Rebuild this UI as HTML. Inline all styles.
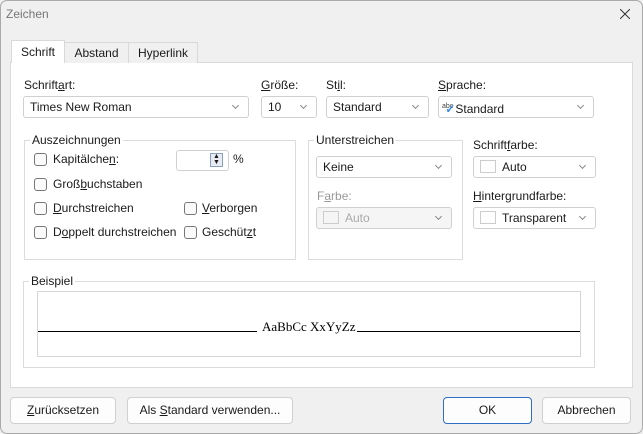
<!DOCTYPE html>
<html><head><meta charset="utf-8"><style>
*{box-sizing:border-box;margin:0;padding:0}
body{width:643px;height:434px;background:#f0f0f0;font-family:"Liberation Sans",sans-serif;font-size:12px;color:#1a1a1a;position:relative;overflow:hidden}
.a{position:absolute;white-space:nowrap}
.win{position:absolute;left:0;top:0;width:643px;height:434px;border:1px solid #aaa;border-radius:7px;background:#f0f0f0}
.panel{position:absolute;left:10px;top:62px;width:623px;height:326px;background:#fff;border:1px solid #dadada}
.tab{position:absolute;top:42px;height:21px;border:1px solid #d9d9d9;border-bottom:none;background:#f0f0f0;text-align:center;line-height:20px}
.cb{position:absolute;height:22px;border:1px solid #d0d0d0;border-radius:3px;background:#fff;padding-left:6px;line-height:20px}
.cb::after{content:"";position:absolute;right:10px;top:6px;width:4px;height:4px;border-right:1px solid #888;border-bottom:1px solid #888;transform:rotate(45deg)}
.grp{position:absolute;border:1px solid #dcdcdc}
.gl{position:absolute;background:#fff;padding:0 2px;top:-8px;left:5px;line-height:14px}
.chk{position:absolute;width:13px;height:13px;border:1px solid #777;border-radius:3px;background:#fafafa}
.sw{display:inline-block;width:16px;height:13px;border:1px solid #ccc;vertical-align:-2px;margin-right:6px}
.btn{position:absolute;top:397px;height:27px;border:1px solid #d0d0d0;border-radius:4px;background:#fdfdfd;text-align:center;line-height:25px}
u{text-decoration:underline}
</style></head><body>
<div class="win"></div>
<div class="a" style="left:6px;top:7px;color:#777;font-size:12px">Zeichen</div>
<svg class="a" style="left:620px;top:9px" width="10" height="10"><path d="M0 0L10 10M10 0L0 10" stroke="#333" stroke-width="1"/></svg>
<div class="panel"></div>
<div class="tab" style="left:64px;width:65px">Abstand</div>
<div class="tab" style="left:128px;width:70px">Hyperlink</div>
<div class="tab" style="left:11px;top:40px;height:23px;width:54px;background:#fff;line-height:22px">Schrift</div>

<div class="a" style="left:24px;top:78px">Schrift<u>a</u>rt:</div>
<div class="cb" style="left:23px;top:96px;width:226px">Times New Roman</div>
<div class="a" style="left:261px;top:78px"><u>G</u>röße:</div>
<div class="cb" style="left:261px;top:96px;width:56px">10</div>
<div class="a" style="left:326px;top:78px">St<u>i</u>l:</div>
<div class="cb" style="left:326px;top:96px;width:103px">Standard</div>
<div class="a" style="left:438px;top:78px"><u>S</u>prache:</div>
<div class="cb" style="left:438px;top:96px;width:156px;padding-left:3px"><span style="font-size:7px;color:#444;vertical-align:5px">abc</span><span style="color:#3a8ee6;margin-left:-8px;font-weight:bold">✓</span>Standard</div>

<div class="grp" style="left:24px;top:140px;width:272px;height:120px"><div class="gl">Auszeichnungen</div></div>
<div class="chk" style="left:34px;top:153px"></div><div class="a" style="left:53px;top:152px">Kapitälche<u>n</u>:</div>
<div class="a" style="left:176px;top:150px;width:53px;height:21px;border:1px solid #d0d0d0;border-radius:3px;background:#fff"></div>
<div class="a" style="left:210px;top:153px;width:13px;height:14px;border:1px solid #8aa0c0;background:#e8ecf2;font-size:7px;line-height:6px;text-align:center">▲<br>▼</div>
<div class="a" style="left:233px;top:152px">%</div>
<div class="chk" style="left:34px;top:178px"></div><div class="a" style="left:53px;top:177px">Groß<u>b</u>uchstaben</div>
<div class="chk" style="left:34px;top:202px"></div><div class="a" style="left:53px;top:201px"><u>D</u>urchstreichen</div>
<div class="chk" style="left:34px;top:226px"></div><div class="a" style="left:53px;top:225px">D<u>o</u>ppelt durchstreichen</div>
<div class="chk" style="left:184px;top:202px"></div><div class="a" style="left:202px;top:201px"><u>V</u>erborgen</div>
<div class="chk" style="left:184px;top:226px"></div><div class="a" style="left:202px;top:225px">Geschüt<u>z</u>t</div>

<div class="grp" style="left:308px;top:140px;width:155px;height:120px"><div class="gl">Unterstreichen</div></div>
<div class="cb" style="left:316px;top:156px;width:136px">Keine</div>
<div class="a" style="left:317px;top:189px;color:#999">F<u>a</u>rbe:</div>
<div class="cb" style="left:316px;top:207px;width:136px;background:#f5f5f5;color:#aaa"><span class="sw"></span>Auto</div>

<div class="a" style="left:473px;top:138px">Schrift<u>f</u>arbe:</div>
<div class="cb" style="left:473px;top:156px;width:123px"><span class="sw"></span>Auto</div>
<div class="a" style="left:473px;top:189px"><u>H</u>intergrundfarbe:</div>
<div class="cb" style="left:473px;top:207px;width:123px"><span class="sw"></span>Transparent</div>

<div class="grp" style="left:23px;top:281px;width:572px;height:87px"><div class="gl">Beispiel</div></div>
<div class="a" style="left:37px;top:291px;width:544px;height:66px;border:1px solid #d6d6d6;background:#fff"></div>
<div class="a" style="left:38px;top:331px;width:219px;height:1px;background:#000"></div>
<div class="a" style="left:357px;top:331px;width:223px;height:1px;background:#000"></div>
<div class="a" style="left:262px;top:319px;font-family:'Liberation Serif',serif;font-size:13px;color:#000">AaBbCc XxYyZz</div>

<div class="btn" style="left:10px;width:106px"><u>Z</u>urücksetzen</div>
<div class="btn" style="left:127px;width:166px">Als <u>S</u>tandard verwenden...</div>
<div class="btn" style="left:443px;width:89px;border-color:#2f6fc4">OK</div>
<div class="btn" style="left:542px;width:89px">Abbrechen</div>
</body></html>
